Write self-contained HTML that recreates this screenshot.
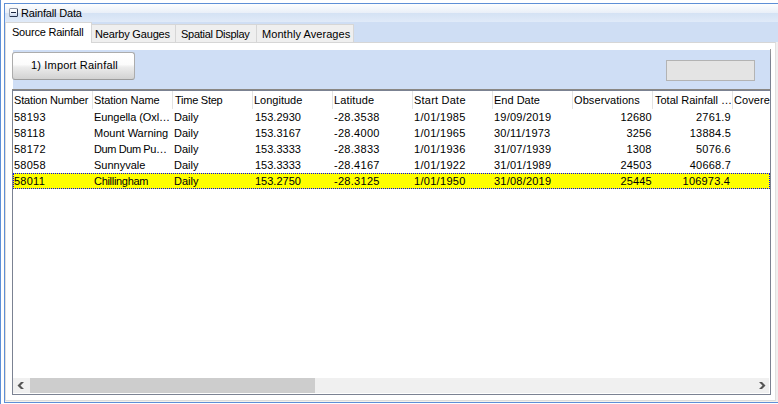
<!DOCTYPE html>
<html><head><meta charset="utf-8">
<style>
*{margin:0;padding:0;box-sizing:border-box}
html,body{width:778px;height:404px;overflow:hidden;background:#fff;font-family:"Liberation Sans",sans-serif;font-size:11px;color:#000}
.a{position:absolute}
.t{position:absolute;white-space:nowrap;line-height:12px;font-size:11px}
</style></head><body>
<div class="a" style="left:0;top:0;width:1px;height:404px;background:#5e8fd6"></div>
<div class="a" style="left:4px;top:3px;width:774px;height:400px;border-left:1px solid #5e8fd6;border-top:1px solid #5e8fd6;border-bottom:1px solid #5e8fd6"></div>
<div class="a" style="left:5px;top:4px;width:773px;height:9px;background:linear-gradient(#fdfefe,#e9eff8)"></div>
<div class="a" style="left:5px;top:13px;width:773px;height:9px;background:linear-gradient(#d4e2f4,#e0eaf8)"></div>
<div class="a" style="left:9px;top:8px;width:9px;height:9px;border:1px solid #8b95a7;border-left-color:#98a1b2;border-right-color:#34405a;border-bottom-color:#28334c;border-radius:1.5px;background:linear-gradient(#ffffff,#f3f6fb 45%,#c9d6ec)"></div>
<div class="a" style="left:11px;top:12px;width:5px;height:1px;background:#1c2740"></div>
<div class="a" style="left:5px;top:22px;width:773px;height:20px;background:#cfdef4"></div>
<div class="a" style="left:5px;top:42px;width:771px;height:359px;background:#fff;border-left:1px solid #e3dfd8;border-top:1px solid #d6d6d6;border-right:1px solid #e0e0e0;border-bottom:1px solid #dcdcdc"></div>
<div class="a" style="left:5px;top:401px;width:773px;height:1px;background:#f4f2ec"></div>
<div class="a" style="left:776px;top:42px;width:2px;height:359px;background:#efefef"></div>
<div class="a" style="left:5px;top:22px;width:87px;height:21px;background:#fff;border:1px solid #d6d6d6;border-left-color:#e3dfd8;border-bottom:none"></div>
<div class="a" style="left:91px;top:24px;width:85px;height:19px;background:#efefef;border:1px solid #d6d6d6"></div>
<div class="a" style="left:175px;top:24px;width:82px;height:19px;background:#efefef;border:1px solid #d6d6d6"></div>
<div class="a" style="left:256px;top:24px;width:98px;height:19px;background:#efefef;border:1px solid #d6d6d6"></div>
<div class="a" style="left:13px;top:50px;width:757px;height:39px;background:#cfdef5"></div>
<div class="a" style="left:770px;top:49px;width:1px;height:41px;background:linear-gradient(#9a9a9a,#7b8292 30%)"></div>
<div class="a" style="left:12px;top:52px;width:123px;height:28px;border:1px solid #acacac;border-bottom-color:#9c9c9c;border-radius:3px;background:linear-gradient(#ffffff 0%,#fcfcfc 44%,#ececec 54%,#d2d2d2 100%)"></div>
<div class="a" style="left:666px;top:60px;width:89px;height:21px;background:#e4e4e4;border:1px solid #b3b3b3"></div>
<div class="a" style="left:12px;top:89px;width:759px;height:306px;background:#fff;border:1px solid #7b8292;border-top:2px solid #7b8292"></div>
<div class="a" style="left:12px;top:89px;width:759px;height:1px;background:#8a8783"></div>
<div class="a" style="left:92px;top:91px;width:1px;height:18px;background:#e3e3e3"></div>
<div class="a" style="left:172px;top:91px;width:1px;height:18px;background:#e3e3e3"></div>
<div class="a" style="left:252px;top:91px;width:1px;height:18px;background:#e3e3e3"></div>
<div class="a" style="left:332px;top:91px;width:1px;height:18px;background:#e3e3e3"></div>
<div class="a" style="left:412px;top:91px;width:1px;height:18px;background:#e3e3e3"></div>
<div class="a" style="left:492px;top:91px;width:1px;height:18px;background:#e3e3e3"></div>
<div class="a" style="left:572px;top:91px;width:1px;height:18px;background:#e3e3e3"></div>
<div class="a" style="left:652px;top:91px;width:1px;height:18px;background:#e3e3e3"></div>
<div class="a" style="left:732px;top:91px;width:1px;height:18px;background:#e3e3e3"></div>
<div class="a" style="left:13px;top:173px;width:757px;height:16px;background:#ffff00;border:1px dotted #0000ff"></div>
<div class="a" style="left:13px;top:378px;width:756px;height:15px;background:#f0f0f0"></div>
<div class="a" style="left:30px;top:378px;width:285px;height:15px;background:#cdcdcd"></div>
<svg class="a" style="left:0;top:0" width="778" height="404"><path d="M21 382H24L20.5 385.5L24 389H21L17.5 385.5Z" fill="#555"/><path d="M759 382H762L765.5 385.5L762 389H759L762.5 385.5Z" fill="#555"/></svg>
<div class="t" style="left:21px;top:7px;letter-spacing:-0.167px">Rainfall Data</div>
<div class="t" style="left:12px;top:26px;letter-spacing:-0.214px">Source Rainfall</div>
<div class="t" style="left:95px;top:28px;letter-spacing:-0.167px">Nearby Gauges</div>
<div class="t" style="left:181px;top:28px;letter-spacing:-0.286px">Spatial Display</div>
<div class="t" style="left:262px;top:28px;letter-spacing:0.067px">Monthly Averages</div>
<div class="t" style="left:31px;top:59px;letter-spacing:0.176px">1) Import Rainfall</div>
<div class="t" style="left:14px;top:94px;letter-spacing:-0.154px">Station Number</div>
<div class="t" style="left:94px;top:94px;letter-spacing:-0.091px">Station Name</div>
<div class="t" style="left:175px;top:94px;letter-spacing:-0.250px">Time Step</div>
<div class="t" style="left:254px;top:94px;letter-spacing:0.000px">Longitude</div>
<div class="t" style="left:334px;top:94px;letter-spacing:0.143px">Latitude</div>
<div class="t" style="left:414px;top:94px;letter-spacing:0.222px">Start Date</div>
<div class="t" style="left:494px;top:94px;letter-spacing:0.000px">End Date</div>
<div class="t" style="left:574px;top:94px;letter-spacing:0.091px">Observations</div>
<div class="t" style="left:655px;top:94px;letter-spacing:0.000px">Total Rainfall …</div>
<div class="a" style="left:733px;top:91px;width:37px;height:18px;overflow:hidden"><div class="t" style="left:1px;top:3px;letter-spacing:0.100px">Covere</div></div>
<div class="t" style="left:14px;top:111px;letter-spacing:0.250px">58193</div>
<div class="t" style="left:94px;top:111px;letter-spacing:-0.077px">Eungella (Oxl…</div>
<div class="t" style="left:174px;top:111px;letter-spacing:0.000px">Daily</div>
<div class="t" style="left:255px;top:111px;letter-spacing:0.000px">153.2930</div>
<div class="t" style="left:334px;top:111px;letter-spacing:0.290px">-28.3538</div>
<div class="t" style="left:414px;top:111px;letter-spacing:0.300px">1/01/1985</div>
<div class="t" style="left:494px;top:111px;letter-spacing:0.220px">19/09/2019</div>
<div class="t" style="left:620.40px;top:111px;letter-spacing:0.150px">12680</div>
<div class="t" style="left:696.00px;top:111px;letter-spacing:0.200px">2761.9</div>
<div class="t" style="left:14px;top:127px;letter-spacing:0.250px">58118</div>
<div class="t" style="left:94px;top:127px;letter-spacing:0.000px">Mount Warning</div>
<div class="t" style="left:174px;top:127px;letter-spacing:0.000px">Daily</div>
<div class="t" style="left:255px;top:127px;letter-spacing:0.000px">153.3167</div>
<div class="t" style="left:334px;top:127px;letter-spacing:0.290px">-28.4000</div>
<div class="t" style="left:414px;top:127px;letter-spacing:0.300px">1/01/1965</div>
<div class="t" style="left:494px;top:127px;letter-spacing:0.220px">30/11/1973</div>
<div class="t" style="left:626.55px;top:127px;letter-spacing:0.150px">3256</div>
<div class="t" style="left:689.80px;top:127px;letter-spacing:0.200px">13884.5</div>
<div class="t" style="left:14px;top:143px;letter-spacing:0.250px">58172</div>
<div class="t" style="left:94px;top:143px;letter-spacing:-0.400px">Dum Dum Pu…</div>
<div class="t" style="left:174px;top:143px;letter-spacing:0.000px">Daily</div>
<div class="t" style="left:255px;top:143px;letter-spacing:0.000px">153.3333</div>
<div class="t" style="left:334px;top:143px;letter-spacing:0.290px">-28.3833</div>
<div class="t" style="left:414px;top:143px;letter-spacing:0.300px">1/01/1936</div>
<div class="t" style="left:494px;top:143px;letter-spacing:0.220px">31/07/1939</div>
<div class="t" style="left:626.55px;top:143px;letter-spacing:0.150px">1308</div>
<div class="t" style="left:696.00px;top:143px;letter-spacing:0.200px">5076.6</div>
<div class="t" style="left:14px;top:159px;letter-spacing:0.250px">58058</div>
<div class="t" style="left:94px;top:159px;letter-spacing:0.000px">Sunnyvale</div>
<div class="t" style="left:174px;top:159px;letter-spacing:0.000px">Daily</div>
<div class="t" style="left:255px;top:159px;letter-spacing:0.000px">153.3333</div>
<div class="t" style="left:334px;top:159px;letter-spacing:0.290px">-28.4167</div>
<div class="t" style="left:414px;top:159px;letter-spacing:0.300px">1/01/1922</div>
<div class="t" style="left:494px;top:159px;letter-spacing:0.220px">31/01/1989</div>
<div class="t" style="left:620.40px;top:159px;letter-spacing:0.150px">24503</div>
<div class="t" style="left:689.80px;top:159px;letter-spacing:0.200px">40668.7</div>
<div class="t" style="left:14px;top:175px;letter-spacing:0.250px">58011</div>
<div class="t" style="left:94px;top:175px;letter-spacing:-0.300px">Chillingham</div>
<div class="t" style="left:174px;top:175px;letter-spacing:0.000px">Daily</div>
<div class="t" style="left:255px;top:175px;letter-spacing:0.000px">153.2750</div>
<div class="t" style="left:334px;top:175px;letter-spacing:0.290px">-28.3125</div>
<div class="t" style="left:414px;top:175px;letter-spacing:0.300px">1/01/1950</div>
<div class="t" style="left:494px;top:175px;letter-spacing:0.220px">31/08/2019</div>
<div class="t" style="left:620.40px;top:175px;letter-spacing:0.150px">25445</div>
<div class="t" style="left:682.60px;top:175px;letter-spacing:0.200px">106973.4</div>
</body></html>
